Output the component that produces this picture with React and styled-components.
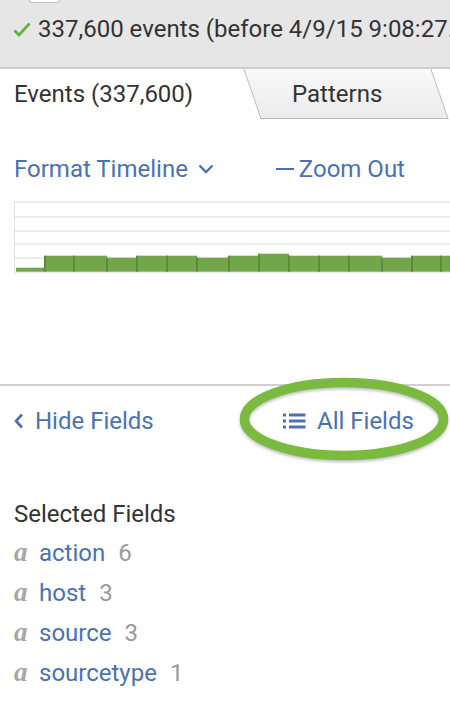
import React from "react";
import styled, { createGlobalStyle } from "styled-components";

const Global = createGlobalStyle`
  html, body { margin: 0; padding: 0; background: #fff; }
  body { font-family: Roboto, "Liberation Sans", Arial, sans-serif; overflow: hidden; }
  * { box-sizing: border-box; }
`;

const BLUE = "#4a72b2";

const Page = styled.div`
  width: 450px;
  height: 718px;
  overflow: hidden;
  background: #fff;
`;

const TopBar = styled.div`
  height: 69px;
  background: #e6e6e6;
  border-bottom: 2px solid #cdcdcd;
  overflow: hidden;
`;

const ButtonStub = styled.div`
  width: 31px;
  height: 3px;
  margin-left: 29px;
  background: #fff;
  border: 1px solid #c4c4c4;
  border-top: none;
  border-radius: 0 0 4px 4px;
`;

const Status = styled.div`
  display: flex;
  align-items: center;
  gap: 7px;
  margin-top: 12px;
  padding-left: 13px;
  font-size: 24px;
  line-height: 28px;
  color: #333;
  white-space: nowrap;

  & > svg {
    flex-shrink: 0;
  }
`;

const TabBar = styled.div`
  display: flex;
  height: 50px;
`;

const Tab = styled.div`
  position: relative;
  z-index: 0;
  flex-shrink: 0;
  width: ${(p) => p.$width}px;
  padding-left: ${(p) => p.$pad}px;
  font-size: 24px;
  line-height: 50px;
  color: #333;
  white-space: nowrap;

  ${(p) =>
    !p.$active &&
    `
    &::before {
      content: "";
      position: absolute;
      inset: 0;
      z-index: -1;
      transform: skewX(19deg);
      background: linear-gradient(#f8f8f8, #ececec);
      border: 1px solid #b9b9b9;
      border-top: none;
    }
  `}
`;

const TimelinePanel = styled.div`
  height: 265px;
  padding: 36px 14px 0;
`;

const Controls = styled.div`
  display: flex;
  align-items: center;
  font-size: 24px;
  line-height: 28px;
  color: ${BLUE};
  white-space: nowrap;
`;

const LinkItem = styled.span`
  display: inline-flex;
  align-items: center;
  gap: ${(p) => p.$gap}px;
  margin-left: ${(p) => p.$offset || 0}px;
  color: ${BLUE};

  & > svg {
    flex-shrink: 0;
  }
`;

const Dash = styled.span`
  display: inline-block;
  width: 18px;
  height: 2.5px;
  background: ${BLUE};
`;

const Chart = styled.svg`
  display: block;
  margin-top: 18px;
  overflow: visible;
`;

const FieldsSection = styled.div`
  border-top: 2px solid #d0d0d0;
  padding: 15px 14px 0;
`;

const FieldsHeader = styled.div`
  position: relative;
  display: flex;
  align-items: center;
  height: 40px;
  font-size: 24px;
  line-height: 40px;
  white-space: nowrap;
`;

const HideSlot = styled.div`
  flex: 0 0 269px;
`;

const Highlight = styled.svg`
  position: absolute;
  left: 224px;
  top: -25px;
  overflow: visible;
  pointer-events: none;
  filter: drop-shadow(0 2px 1.5px rgba(0, 0, 0, 0.25));
`;

const SectionTitle = styled.div`
  margin-top: 54px;
  font-size: 24px;
  line-height: 38px;
  color: #333;
`;

const FieldRow = styled.div`
  display: flex;
  align-items: baseline;
  height: 40px;
  font-size: 24px;
  line-height: 40px;
  white-space: nowrap;
`;

const TypeGlyph = styled.span`
  width: 25px;
  font-family: "Liberation Serif", "DejaVu Serif", serif;
  font-style: italic;
  font-weight: bold;
  font-size: 27px;
  line-height: 1;
  color: #a6a6a6;
`;

const FieldName = styled.span`
  color: ${BLUE};
`;

const FieldCount = styled.span`
  margin-left: 13px;
  color: #9a9a9a;
`;

const bars = [
  [2, 29, 66.7],
  [31, 29, 54.7],
  [60, 33, 54.7],
  [93, 30, 56.7],
  [123, 30, 54.7],
  [153, 30, 54.7],
  [183, 32, 56.7],
  [215, 30, 54.7],
  [245, 30, 52.7],
  [275, 30, 54.7],
  [305, 30, 54.7],
  [335, 33, 54.7],
  [368, 30, 56.7],
  [398, 29, 54.7],
  [427, 30, 54.7],
];

const fields = [
  ["action", 6],
  ["host", 3],
  ["source", 3],
  ["sourcetype", 1],
];

export default function App() {
  return (
    <Page>
      <Global />
      <TopBar>
        <ButtonStub />
        <Status>
          <svg width="18" height="15" viewBox="0 0 18 15">
            <polyline points="1.5,8.5 6,13 16.5,1.5" fill="none" stroke="#5db33a" strokeWidth="2.6" />
          </svg>
          <span>337,600 events (before 4/9/15 9:08:27.000 AM)</span>
        </Status>
      </TopBar>

      <TabBar>
        <Tab $active $width={252} $pad={14}>Events (337,600)</Tab>
        <Tab $width={188} $pad={40}>Patterns</Tab>
      </TabBar>

      <TimelinePanel>
        <Controls>
          <LinkItem $gap={10}>
            Format Timeline
            <svg width="16" height="10" viewBox="0 0 16 10">
              <polyline points="1.5,1.5 8,8 14.5,1.5" fill="none" stroke={BLUE} strokeWidth="2.4" />
            </svg>
          </LinkItem>
          <LinkItem $gap={5} $offset={62}>
            <Dash />
            Zoom Out
          </LinkItem>
        </Controls>
        <Chart width="436" height="72" viewBox="0 0 436 72">
          {[1, 16, 30, 43, 57].map((y) => (
            <line key={y} x1="0" x2="436" y1={y} y2={y} stroke="#e6e6e6" strokeWidth="1.5" />
          ))}
          <line x1="0.5" x2="0.5" y1="0" y2="72" stroke="#e2e2e2" strokeWidth="1" />
          <line x1="0" x2="436" y1="71.5" y2="71.5" stroke="#ececec" strokeWidth="1.5" />
          {bars.map(([x, w, top], i) => (
            <g key={i}>
              <rect x={x} y={top} width={w} height={70.7 - top} fill="#72a64a" />
              {i > 0 && <rect x={x - 1} y={top} width="2" height={70.7 - top} fill="#5a8b39" />}
            </g>
          ))}
        </Chart>
      </TimelinePanel>

      <FieldsSection>
        <FieldsHeader>
          <HideSlot>
            <LinkItem $gap={11}>
              <svg width="10" height="16" viewBox="0 0 10 16">
                <polyline points="8,1.5 2,8 8,14.5" fill="none" stroke={BLUE} strokeWidth="2.6" />
              </svg>
              Hide Fields
            </LinkItem>
          </HideSlot>
          <LinkItem $gap={11}>
            <svg width="23" height="16" viewBox="0 0 23 16">
              <rect x="0" y="0.5" width="3" height="3" fill={BLUE} />
              <rect x="0" y="6.5" width="3" height="3" fill={BLUE} />
              <rect x="0" y="12.5" width="3" height="3" fill={BLUE} />
              <rect x="6" y="0.5" width="16.5" height="3" fill={BLUE} />
              <rect x="6" y="6.5" width="16.5" height="3" fill={BLUE} />
              <rect x="6" y="12.5" width="16.5" height="3" fill={BLUE} />
            </svg>
            All Fields
          </LinkItem>
          <Highlight width="212" height="90" viewBox="0 0 212 90">
            <ellipse cx="106" cy="43" rx="99.5" ry="36.5" fill="none" stroke="#7aba3e" strokeWidth="9.5" />
          </Highlight>
        </FieldsHeader>

        <SectionTitle>Selected Fields</SectionTitle>
        {fields.map(([name, count]) => (
          <FieldRow key={name}>
            <TypeGlyph>a</TypeGlyph>
            <FieldName>{name}</FieldName>
            <FieldCount>{count}</FieldCount>
          </FieldRow>
        ))}
      </FieldsSection>
    </Page>
  );
}
